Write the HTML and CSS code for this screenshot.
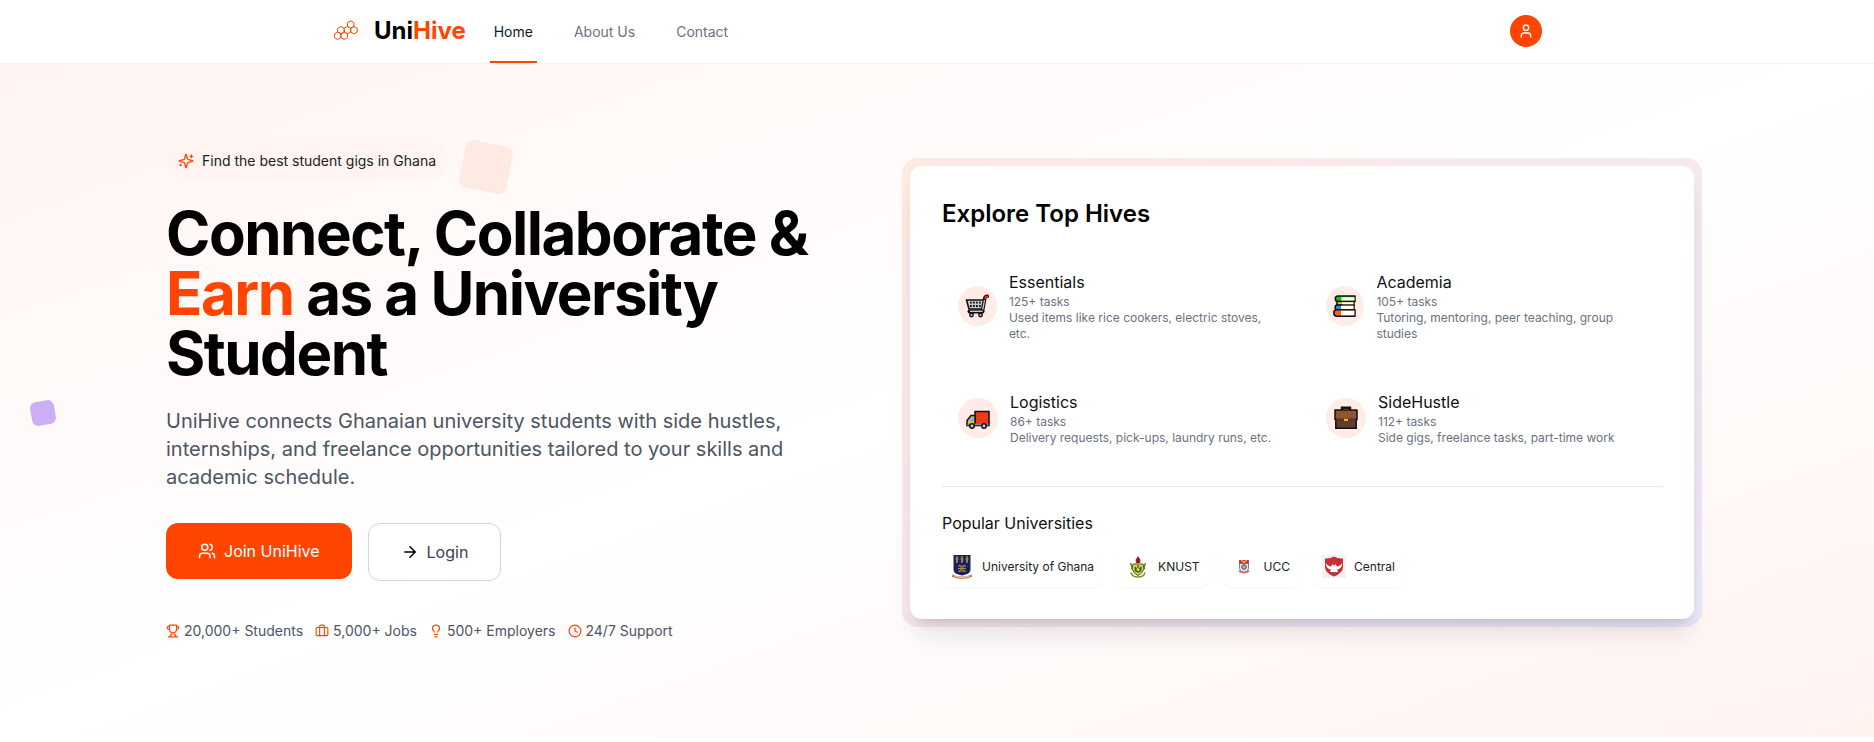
FILE: index.html
```html
<!DOCTYPE html>
<html lang="en">
<head>
<meta charset="utf-8">
<meta name="viewport" content="width=device-width, initial-scale=1">
<title>UniHive</title>
<link rel="stylesheet" href="styles.css">
</head>
<body>
<header class="header">
  <div class="header-inner">
    <a class="brand" href="#">
      <svg class="brand-mark" viewBox="0 0 24 24" fill="none" stroke="currentColor" stroke-width="1" aria-hidden="true">
        <path d="M3.700 13l3.250 1.900v3.700l-3.250 1.900-3.250-1.900v-3.700zM10.200 13l3.250 1.900v3.700l-3.250 1.900-3.250-1.900v-3.700zM6.950 7.400l3.250 1.900v3.700l-3.250 1.900-3.250-1.900V9.300zM13.450 7.400l3.250 1.900v3.700l-3.250 1.900-3.250-1.900V9.300zM19.950 7.400l3.250 1.900v3.700l-3.250 1.900-3.250-1.900V9.300zM16.700 1.800l3.250 1.900v3.700l-3.250 1.900-3.250-1.900V3.700z"/>
      </svg>
      <span class="brand-name">Uni<span class="accent">Hive</span></span>
    </a>
    <nav class="nav">
      <a class="nav-link active" href="#">Home</a>
      <a class="nav-link" href="#">About Us</a>
      <a class="nav-link" href="#">Contact</a>
    </nav>
    <button class="avatar" type="button" aria-label="Account">
      <svg class="icon-16" viewBox="0 0 24 24"><path d="M19 21v-2a4 4 0 0 0-4-4H9a4 4 0 0 0-4 4v2"/><circle cx="12" cy="7" r="4"/></svg>
    </button>
  </div>
</header>

<main class="hero">
  <span class="square square-lilac"></span>
  <div class="hero-inner">
    <section class="intro">
      <div class="badge">
        <svg class="icon-16 accent" viewBox="0 0 24 24"><path d="M9.937 15.500A2 2 0 0 0 8.500 14.063l-6.135-1.582a.5.5 0 0 1 0-.962L8.500 9.936A2 2 0 0 0 9.937 8.500l1.582-6.135a.5.5 0 0 1 .963 0L14.063 8.500A2 2 0 0 0 15.500 9.937l6.135 1.581a.5.5 0 0 1 0 .964L15.500 14.063a2 2 0 0 0-1.437 1.437l-1.582 6.135a.5.5 0 0 1-.963 0z"/><path d="M20 3v4M22 5h-4M4 17v2M5 18H3"/></svg>
        <span>Find the best student gigs in Ghana</span>
        <span class="square square-peach"></span>
      </div>
      <h1 class="title">Connect, Collaborate &amp; <span class="accent">Earn</span> as a University Student</h1>
      <p class="lead">UniHive connects Ghanaian university students with side hustles, internships, and freelance opportunities tailored to your skills and academic schedule.</p>
      <div class="actions">
        <button class="btn btn-primary" type="button">
          <svg class="icon-18" viewBox="0 0 24 24"><path d="M16 21v-2a4 4 0 0 0-4-4H6a4 4 0 0 0-4 4v2"/><circle cx="9" cy="7" r="4"/><path d="M22 21v-2a4 4 0 0 0-3-3.870M16 3.130a4 4 0 0 1 0 7.750"/></svg>
          Join UniHive
        </button>
        <button class="btn btn-outline" type="button">
          <svg class="icon-18" viewBox="0 0 24 24"><path d="M5 12h14M12 5l7 7-7 7"/></svg>
          <span>Login</span>
        </button>
      </div>
      <ul class="stats">
        <li class="stat"><svg class="icon-14 accent" viewBox="0 0 24 24"><path d="M6 9H4.500a2.500 2.500 0 0 1 0-5H6M18 9h1.500a2.500 2.500 0 0 0 0-5H18M4 22h16M10 14.660V17c0 .550-.470.980-.970 1.210C7.850 18.750 7 20.240 7 22M14 14.660V17c0 .550.470.980.970 1.210C16.150 18.750 17 20.240 17 22M18 2H6v7a6 6 0 0 0 12 0z"/></svg>20,000+ Students</li>
        <li class="stat"><svg class="icon-14 accent" viewBox="0 0 24 24"><path d="M16 20V4a2 2 0 0 0-2-2h-4a2 2 0 0 0-2 2v16"/><rect x="2" y="6" width="20" height="14" rx="2"/></svg>5,000+ Jobs</li>
        <li class="stat"><svg class="icon-14 accent" viewBox="0 0 24 24"><path d="M15 14c.200-1 .700-1.700 1.500-2.500 1-.900 1.500-2.200 1.500-3.500A6 6 0 0 0 6 8c0 1 .200 2.200 1.500 3.500.700.700 1.300 1.500 1.500 2.500M9 18h6M10 22h4"/></svg>500+ Employers</li>
        <li class="stat"><svg class="icon-14 accent" viewBox="0 0 24 24"><circle cx="12" cy="12" r="10"/><path d="M12 6v6l4 2"/></svg>24/7 Support</li>
      </ul>
    </section>

    <div class="frame">
      <section class="card">
        <h2 class="card-title">Explore Top Hives</h2>
        <div class="hives">
          <a class="hive" href="#">
            <span class="hive-icon">
              <svg class="emoji" viewBox="0 0 24 24" aria-hidden="true">
                <path d="M17.500 17l2.200-12.500q.5-2.300 2.600-2.200" fill="none" stroke="#111" stroke-width="3.600" stroke-linecap="round"/>
                <path d="M1.500 6h17l-1.700 9H4z" fill="#c6cacd" stroke="#111" stroke-width="1.600" stroke-linejoin="round"/>
                <path d="M5 8.700h11M5 12h11" stroke="#111" stroke-width="1.800" stroke-dasharray="1.800 1.200"/>
                <path d="M17.500 17l2-11" fill="none" stroke="#c6cacd" stroke-width="1.300"/>
                <path d="M20.300 4.200q.6-1.700 2-1.700" fill="none" stroke="#f03a17" stroke-width="2" stroke-linecap="round"/>
                <path d="M17.500 17.500H4.500" fill="none" stroke="#111" stroke-width="4" stroke-linecap="round"/>
                <path d="M17.500 17.300H5" stroke="#c6cacd" stroke-width="1.400"/>
                <circle cx="6.500" cy="21" r="1.700" fill="#ddd" stroke="#111" stroke-width="1.500"/>
                <circle cx="15.500" cy="21" r="1.700" fill="#ddd" stroke="#111" stroke-width="1.500"/>
              </svg>
            </span>
            <span class="hive-text"><span class="hive-name">Essentials</span><span class="hive-note">125+ tasks</span><span class="hive-note">Used items like rice cookers, electric stoves, etc.</span></span>
          </a>
          <a class="hive" href="#">
            <span class="hive-icon">
              <svg class="emoji" viewBox="0 0 24 24" aria-hidden="true">
                <g stroke="#111" stroke-width="1.500" stroke-linejoin="round">
                  <path d="M22 2H5a2.700 2.700 0 0 0 0 5.500h17z" fill="#16c60c"/><path d="M21 7.500H4v3.500h17z" fill="#fcbf2c"/><path d="M21 11H4.500a2.400 2.400 0 0 0 0 4.800H21z" fill="#2b8fe0"/><path d="M22 15.800H4a3.200 3.200 0 0 0 0 6.400h18z" fill="#f7630c"/>
                </g>
                <path d="M8.500 3.300h13v3.200h-13zM9 8.300h11.500v2H9zM8 11.800h12.500v3.200H8zM8 16.700h13.300v4.600H8z" fill="#fff"/>
              </svg>
            </span>
            <span class="hive-text"><span class="hive-name">Academia</span><span class="hive-note">105+ tasks</span><span class="hive-note">Tutoring, mentoring, peer teaching, group studies</span></span>
          </a>
          <a class="hive" href="#">
            <span class="hive-icon">
              <svg class="emoji" viewBox="0 0 24 24" aria-hidden="true">
                <path d="M9 5.500h14v14H9z" fill="#f03a17" stroke="#111" stroke-width="1.500"/>
                <path d="M9 9.500H5l-4 5v5h8z" fill="#fcb814" stroke="#111" stroke-width="1.500"/>
                <path d="M5.500 11H8v4H3z" fill="#50c8f0"/>
                <path d="M1.500 18.500h21" stroke="#888" stroke-width="1.500"/>
                <circle cx="6" cy="20" r="2.200" fill="#ccc" stroke="#111" stroke-width="1.500"/><circle cx="18" cy="20" r="2.200" fill="#ccc" stroke="#111" stroke-width="1.500"/>
              </svg>
            </span>
            <span class="hive-text"><span class="hive-name">Logistics</span><span class="hive-note">86+ tasks</span><span class="hive-note">Delivery requests, pick-ups, laundry runs, etc.</span></span>
          </a>
          <a class="hive" href="#">
            <span class="hive-icon">
              <svg class="emoji" viewBox="0 0 24 24" aria-hidden="true">
                <path d="M8 4V1.800h8V4" fill="none" stroke="#111" stroke-width="2.400"/>
                <path d="M1.800 13h20.400v9.200H1.800z" fill="#603d30" stroke="#111" stroke-width="1.500"/>
                <path d="M1 4h22v9.500H1z" fill="#8e562e" stroke="#111" stroke-width="1.500" stroke-linejoin="round"/>
                <path d="M2.500 13.500h19" stroke="#603d30" stroke-width="1.500"/>
                <path d="M10 12.800h4v2.200h-4z" fill="#fcb814"/>
              </svg>
            </span>
            <span class="hive-text"><span class="hive-name">SideHustle</span><span class="hive-note">112+ tasks</span><span class="hive-note">Side gigs, freelance tasks, part-time work</span></span>
          </a>
        </div>
        <div class="universities">
          <h3 class="uni-title">Popular Universities</h3>
          <div class="uni-list">
            <a class="uni" href="#">
              <svg class="crest" viewBox="0 0 24 24" aria-hidden="true"><path d="M3.500 0h17v15q0 4-8.500 5.500Q3.500 19 3.500 15z" fill="#1b1f5e"/><path d="M7 1v7M12 1v7M17 1v7M5.500 4h3M10.500 4h3M15.500 4h3M6 6h2M11 6h2M16 6h2" stroke="#c59a4c" stroke-width="1.200"/><path d="M8 11h8M8 13.500h8M8 16h8M9 10q5 3.500 0 7M15 10q-5 3.500 0 7" fill="none" stroke="#b68a46"/><path d="M2 19.500q10 4 20 0v2.500q-10 4-20 0z" fill="#b88d5c"/><path d="M5 21.500q7 2 14 0" stroke="#f0dfc8" fill="none" stroke-width=".8"/></svg>
              University of Ghana</a>
            <a class="uni" href="#">
              <svg class="crest" viewBox="0 0 24 24" aria-hidden="true"><path d="M12 1l2.500 4-.5 3h-4l-.5-3z" fill="#b3202a"/><path d="M12 3v5" stroke="#221"/><path d="M4.500 8q2 5 1 6M19.500 8q-2 5-1 6" fill="none" stroke="#6a7a2e" stroke-width="1.500"/><path d="M7 9h10l1 5q-2 5-6 6.500Q8 19 6 14z" fill="#e7d43a" stroke="#3b5a26"/><path d="M8.500 11l3.500 3 3.500-3v5L12 18l-3.500-2z" fill="#2f6b35"/><path d="M12 10v4" stroke="#332"/><circle cx="12" cy="14.500" r="1.500" fill="#e7d43a"/><path d="M5 17.500q1 4.500 7 4.500t7-4.500" fill="none" stroke="#8b8a34" stroke-width="1.500"/></svg>
              KNUST</a>
            <a class="uni" href="#">
              <svg class="crest" viewBox="0 0 24 24" aria-hidden="true"><path d="M7.500 5.500h9v8q0 3-4.500 4.500-4.500-1.500-4.500-4.500z" fill="#dfe5f5" stroke="#5165ad" stroke-width=".8"/><path d="M7.200 5.200h9.600v3.600H7.200z" fill="#d8262f"/><path d="M9 6h2l1 2 1-2h2" fill="none" stroke="#ffd54a"/><circle cx="12" cy="12" r="2.300" fill="#e7ad3c" stroke="#3346a0"/><path d="M7 16q5 3 10 0" fill="none" stroke="#da5b69" stroke-width="1.500"/></svg>
              UCC</a>
            <a class="uni" href="#">
              <svg class="crest" viewBox="0 0 24 24" aria-hidden="true"><path d="M0 0h24v23H0z" fill="#f2f2f3"/><path d="M3 3.500Q8 4 12 1.500 16 4 21 3.500V12q0 6-9 9.500Q3 18 3 12z" fill="#c92f32"/><path d="M3.500 8q1 6 5.500 6.500l-1 2.500h8l-1-2.500q4.500-.5 5.500-6.500-3 3.500-5.500 3.500l-1.500-2.500-1.500 2-1.500-2L9 11.500Q6.500 11.500 3.500 8z" fill="#fff"/><path d="M8 17h8l-4 3.500z" fill="#9c4c4c"/></svg>
              Central</a>
          </div>
        </div>
      </section>
    </div>
  </div>
</main>
</body>
</html>
```

FILE: styles.css
```css
* { box-sizing: border-box; }

body {
  margin: 0;
  background: #fff;
  color: #000;
  font-family: Inter, "Liberation Sans", sans-serif;
  font-size: 16px;
  line-height: 24px;
}

h1, h2, h3, p, ul { margin: 0; padding: 0; }
a { color: inherit; text-decoration: none; }
button { font: inherit; cursor: pointer; }

svg {
  display: block;
  flex-shrink: 0;
}

.icon-14, .icon-16, .icon-18 {
  fill: none;
  stroke: currentColor;
  stroke-width: 2;
  stroke-linecap: round;
  stroke-linejoin: round;
}
.icon-14 { width: 14px; height: 14px; }
.icon-16 { width: 16px; height: 16px; }
.icon-18 { width: 18px; height: 18px; }

.accent { color: #ff4500; }

/* Header */
.header {
  background: #fff;
  border-bottom: 1px solid #f3f4f6;
}
.header-inner {
  display: flex;
  align-items: stretch;
  max-width: 1210px;
  height: 63px;
  margin: 0 auto;
  padding-left: 2px;
}
.brand {
  display: flex;
  align-items: center;
  gap: 16px;
  padding-bottom: 2px;
}
.brand-mark {
  width: 24px;
  height: 24px;
  color: #ff4500;
}
.brand-name {
  font-size: 24px;
  font-weight: 700;
  line-height: 32px;
}
.nav {
  display: flex;
  gap: 33px;
  margin-left: 24px;
}
.nav-link {
  display: flex;
  align-items: center;
  padding: 2px 4px 0;
  border-bottom: 2px solid transparent;
  color: #6b7280;
  font-size: 14px;
}
.nav-link.active {
  border-color: #ff4500;
  color: #111827;
}
.avatar {
  display: grid;
  place-items: center;
  align-self: center;
  width: 32px;
  height: 32px;
  margin: 0 0 2px auto;
  padding: 0;
  border: 0;
  border-radius: 50%;
  background: #ff4500;
  color: #fff;
}

/* Hero */
.hero {
  position: relative;
  padding: 79px 180px 96px 166px;
  background: linear-gradient(to bottom right, #fff4f1, #fff 50%, #fff3f0);
}
.hero-inner {
  display: grid;
  grid-template-columns: minmax(0, 696fr) minmax(0, 784fr);
  gap: 48px;
  align-items: center;
}
.square {
  position: absolute;
}
.square-lilac {
  top: 337px;
  left: 31px;
  width: 24px;
  height: 24px;
  border-radius: 6px;
  background: #cbaef5;
  transform: rotate(-10deg);
}
.square-peach {
  top: 0;
  right: -62px;
  width: 48px;
  height: 48px;
  border-radius: 8px;
  background: #ffe9e3;
  transform: rotate(12deg);
}

.badge {
  position: relative;
  display: inline-flex;
  align-items: center;
  gap: 8px;
  padding: 8px 12px;
  border-radius: 18px;
  background: #fff4f1;
  color: #222;
  font-size: 14px;
  line-height: 20px;
  vertical-align: top;
}
.title {
  margin-top: 24px;
  font-size: 60px;
  font-weight: 700;
  line-height: 60px;
  letter-spacing: -0.025em;
}
.lead {
  max-width: 640px;
  margin-top: 24px;
  color: #4b5563;
  font-size: 20px;
  line-height: 28px;
}
.actions {
  display: flex;
  align-items: flex-start;
  gap: 16px;
  margin-top: 32px;
}
.btn {
  display: flex;
  align-items: center;
  gap: 8px;
  padding: 16px 32px;
  border: 0;
  border-radius: 12px;
}
.btn-primary {
  background: #ff4500;
  color: #fff;
}
.btn-outline {
  border: 1px solid #d1d5db;
  background: #fff;
  color: #000;
}
.btn-outline span { color: #374151; }

.stats {
  display: flex;
  gap: 12px;
  margin-top: 40px;
  color: #4b5563;
  font-size: 14px;
  line-height: 20px;
  list-style: none;
}
.stat {
  display: flex;
  align-items: center;
  gap: 4px;
}

/* Hives card */
.frame {
  margin: 0 -8px;
  padding: 8px;
  border-radius: 16px;
  background: linear-gradient(to bottom right, #ffeae2, #f7e8ef 50%, #ebe6fa);
}
.card {
  padding: 32px;
  border-radius: 12px;
  background: #fff;
  box-shadow: 0 20px 25px -5px rgba(0, 0, 0, 0.1), 0 8px 10px -6px rgba(0, 0, 0, 0.1);
}
.card-title {
  font-size: 24px;
  font-weight: 600;
  line-height: 32px;
}
.hives {
  display: grid;
  grid-template-columns: repeat(2, minmax(0, 1fr));
  gap: 16px;
  margin-top: 24px;
}
.hive {
  display: flex;
  align-items: center;
  gap: 12px;
  padding: 16px;
}
.hive-icon {
  display: grid;
  place-items: center;
  flex: 0 1 40px;
  height: 40px;
  border-radius: 50%;
  background: #ffece6;
}
.emoji {
  width: 24px;
  height: 24px;
}
.hive-text {
  display: flex;
  flex-direction: column;
}
.hive-name { color: #111; }
.hive-note {
  color: #6b7280;
  font-size: 12px;
  line-height: 16px;
}
.universities {
  margin-top: 24px;
  padding-top: 24px;
  border-top: 1px solid #e5e7eb;
}
.uni-title {
  color: #111;
  font-size: 16px;
  font-weight: 400;
}
.uni-list {
  display: flex;
  flex-wrap: wrap;
  gap: 16px;
  margin-top: 12px;
}
.uni {
  display: flex;
  align-items: center;
  gap: 8px;
  padding: 8px;
  border-radius: 8px;
  background: #fff;
  box-shadow: 0 1px 2px rgba(0, 0, 0, 0.05);
  color: #222;
  font-size: 12px;
}
.crest {
  width: 24px;
  height: 24px;
}
```
